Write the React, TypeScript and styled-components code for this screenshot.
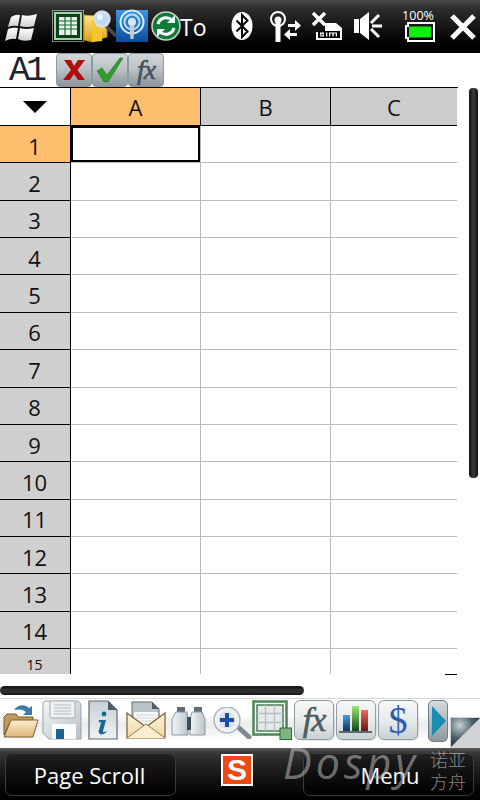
import React from "react";
import styled, { createGlobalStyle } from "styled-components";

const Global = createGlobalStyle`
  html, body { margin: 0; padding: 0; background: #fff; }
  body { font-family: "Open Sans", "Noto Sans", sans-serif; }
  * { box-sizing: border-box; }
`;

const Screen = styled.div`
  position: relative;
  width: 480px;
  height: 800px;
  overflow: hidden;
  display: flex;
  flex-direction: column;
  background: #fff;
`;

const StatusBar = styled.div`
  height: 53px;
  flex: none;
  position: relative;
  display: flex;
  align-items: center;
  padding-left: 5px;
  background: linear-gradient(#4a4a4a 0, #2e2e2e 8px, #161616 26px, #000 44px, #000 100%);
`;

const TitleText = styled.span`
  position: absolute;
  left: 180px;
  top: 12px;
  font-size: 23px;
  line-height: 30px;
  color: #fff;
`;

const StatusSlot = styled.div<{ $w: number; $ml?: number }>`
  width: ${(p) => p.$w}px;
  height: 53px;
  flex: none;
  margin-left: ${(p) => p.$ml ?? 0}px;
  position: relative;
  svg { display: block; }
`;

const BatteryLabel = styled.span`
  position: absolute;
  left: -3px;
  top: 9px;
  width: 36px;
  text-align: center;
  font-size: 12.5px;
  line-height: 13px;
  color: #fff;
`;

const FormulaBar = styled.div`
  height: 34px;
  flex: none;
  display: flex;
  align-items: center;
  background: #fff;
`;

const CellName = styled.div`
  width: 56px;
  height: 34px;
  padding-left: 9px;
  font-family: "Liberation Mono", monospace;
  font-size: 35px;
  line-height: 36px;
  letter-spacing: -4px;
  color: #1c2430;
`;

const FormulaButton = styled.div`
  width: 36px;
  height: 34px;
  flex: none;
  border: 1px solid #8b9ba3;
  border-radius: 4px;
  display: flex;
  align-items: center;
  justify-content: center;
  background: linear-gradient(#d2d7da 0, #bcc3c6 45%, #8d9699 100%);
`;

const FxText = styled.span<{ $size: number; $color: string }>`
  font-family: "Liberation Serif", serif;
  font-style: italic;
  font-size: ${(p) => p.$size}px;
  line-height: 1;
  letter-spacing: -1px;
  color: ${(p) => p.$color};
  -webkit-text-stroke: 0.6px ${(p) => p.$color};
`;

const Sheet = styled.div`
  height: 587px;
  width: 458px;
  flex: none;
  overflow: hidden;
  border-top: 1px solid #000;
  display: grid;
  grid-template-columns: 71px 130px 130px 126px;
  grid-template-rows: 38px repeat(15, 37.36px);
`;

const Corner = styled.div`
  border-right: 1px solid #000;
  border-bottom: 1px solid #000;
  display: flex;
  align-items: center;
  justify-content: center;
  background: #fff;
`;

const CornerArrow = styled.div`
  width: 0;
  height: 0;
  border-left: 12px solid transparent;
  border-right: 12px solid transparent;
  border-top: 12px solid #000;
`;

const ColHead = styled.div<{ $active?: boolean }>`
  background: ${(p) => (p.$active ? "#ffbe6e" : "#cccccc")};
  border-right: 1px solid #000;
  border-bottom: 1px solid #000;
  display: flex;
  align-items: center;
  justify-content: center;
  font-size: 22px;
  color: #111;
  &:nth-child(4) { border-right: 0; }
`;

const RowHead = styled.div<{ $active?: boolean; $small?: boolean }>`
  background: ${(p) => (p.$active ? "#ffbe6e" : "#cfcfcf")};
  border-right: 1px solid #000;
  border-bottom: 1px solid #000;
  display: flex;
  align-items: ${(p) => (p.$small ? "flex-start" : "center")};
  justify-content: center;
  font-size: ${(p) => (p.$small ? 14 : 22)}px;
  color: #111;
  padding-top: ${(p) => (p.$small ? 6 : 3)}px;
  padding-right: 1px;
`;

const Cell = styled.div<{ $selected?: boolean; $last?: boolean }>`
  background: #fff;
  border-right: ${(p) => (p.$last ? "0" : "1px solid #b9b9b9")};
  border-bottom: 1px solid #b9b9b9;
  box-shadow: ${(p) => (p.$selected ? "inset 0 0 0 2px #000" : "none")};
`;

const VThumb = styled.div`
  position: absolute;
  left: 469px;
  top: 88px;
  width: 9px;
  height: 390px;
  border-radius: 4px;
  background: linear-gradient(90deg, #111, #3a3a3a 50%, #111);
`;

const GridDash = styled.div`
  position: absolute;
  left: 445px;
  top: 674px;
  width: 12px;
  height: 1px;
  background: #000;
`;

const HScrollTrack = styled.div`
  height: 24px;
  flex: none;
  padding-top: 12px;
  background: #fff;
`;

const HThumb = styled.div`
  width: 304px;
  height: 9px;
  border-radius: 4.5px;
  background: linear-gradient(#111, #333 55%, #161616);
`;

const Toolbar = styled.div`
  height: 50px;
  flex: none;
  position: relative;
  display: flex;
  align-items: flex-start;
  border-top: 1px solid #d6d6d6;
  background: linear-gradient(#fff 0, #fff 15px, #ececec 25px, #f4f4f4 34px, #fff 42px);
`;

const ToolSlot = styled.div<{ $w: number; $ml: number; $mt: number }>`
  width: ${(p) => p.$w}px;
  flex: none;
  margin-left: ${(p) => p.$ml}px;
  margin-top: ${(p) => p.$mt}px;
  svg { display: block; }
`;

const ToolButton = styled.div`
  width: 40px;
  height: 40px;
  flex: none;
  margin-top: 1px;
  margin-left: 2px;
  border: 1px solid #8e9ca6;
  border-radius: 6px;
  display: flex;
  align-items: center;
  justify-content: center;
  background: linear-gradient(#f6f7f8 0, #e6e9ea 55%, #c9cfd2 100%);
  box-shadow: 1px 1px 1px rgba(0, 0, 0, 0.1);
`;

const DollarText = styled.span`
  font-family: "Liberation Serif", serif;
  font-size: 38px;
  line-height: 1;
  color: #2a5cb0;
`;

const NextButton = styled.div`
  width: 20px;
  height: 42px;
  flex: none;
  margin-left: 10px;
  margin-top: 1px;
  border: 1px solid #6f8088;
  border-radius: 5px;
  background: linear-gradient(#d5dadc, #8f999d);
  display: flex;
  align-items: center;
  padding-left: 3px;
`;

const NextArrow = styled.div`
  width: 0;
  height: 0;
  border-top: 15px solid transparent;
  border-bottom: 15px solid transparent;
  border-left: 14px solid #1c8db0;
`;

const CornerFold = styled.div`
  position: absolute;
  right: 0;
  bottom: 0;
  svg { display: block; }
`;

const SoftBar = styled.div`
  height: 52px;
  flex: none;
  position: relative;
  display: flex;
  align-items: center;
  padding-left: 5px;
  background: linear-gradient(#5a5a5a 0, #3a3a3a 4px, #262626 14px, #0c0c0c 36px, #000 100%);
`;

const SoftKey = styled.div<{ $ml?: number; $shift?: number }>`
  width: 171px;
  height: 43px;
  flex: none;
  margin-left: ${(p) => p.$ml ?? 0}px;
  margin-top: 1px;
  border: 1px solid #3c3c3c;
  border-radius: 7px;
  display: flex;
  align-items: center;
  justify-content: center;
  padding-left: ${(p) => Math.max(p.$shift ?? 0, 0)}px;
  padding-right: ${(p) => Math.max(-(p.$shift ?? 0), 0)}px;
  color: #fff;
  font-size: 22px;
  background: rgba(0, 0, 0, 0.35);
  z-index: 1;
`;

const Sogou = styled.div`
  position: absolute;
  left: 221px;
  top: 6px;
  width: 32px;
  height: 32px;
  border: 2px solid #fff;
  background: #ec4a12;
  color: #fff;
  font-family: "Liberation Sans", sans-serif;
  font-weight: 700;
  font-size: 30px;
  line-height: 28px;
  text-align: center;
  z-index: 2;
`;

const Watermark = styled.div`
  position: absolute;
  left: 283px;
  top: -15px;
  font-family: "Open Sans", sans-serif;
  font-style: italic;
  font-size: 43px;
  line-height: 60px;
  letter-spacing: 4px;
  color: rgba(190, 190, 190, 0.55);
  z-index: 3;
  white-space: nowrap;
`;

const WatermarkCjk = styled.div`
  position: absolute;
  left: 430px;
  top: 0;
  width: 38px;
  font-family: "Noto Sans CJK SC", sans-serif;
  font-size: 18px;
  font-weight: 300;
  line-height: 22px;
  color: rgba(190, 190, 190, 0.7);
  z-index: 3;
`;

const Windows = () => (
  <svg width="32" height="53" viewBox="0 0 32 53">
    <defs>
      <linearGradient id="win" x1="0" y1="0" x2="0" y2="1">
        <stop offset="0" stopColor="#fff" />
        <stop offset="1" stopColor="#cfcfcf" />
      </linearGradient>
    </defs>
    <path d="M6 17q5-3 9-2l-2 11q-5-1-10 1z" fill="url(#win)" />
    <path d="M17 15q6 2 15-1l-3 12q-8 2-14 0z" fill="url(#win)" />
    <path d="M3 29q5-2 10-1l-2 11q-5-1-11 2z" fill="url(#win)" />
    <path d="M15 28q6 2 14 0l-3 12q-8 2-13-1z" fill="url(#win)" />
  </svg>
);

const AppIcon = () => (
  <svg width="32" height="53" viewBox="0 0 32 53">
    <rect x="0.5" y="10.5" width="31" height="31" fill="none" stroke="#fff" strokeDasharray="1 1" />
    <rect x="2" y="12" width="28" height="28" fill="#9fd6a2" />
    <rect x="4" y="14" width="24" height="24" fill="#0f3d22" />
    <rect x="7" y="17" width="18" height="18" fill="#e8f3e4" />
    <path d="M7 21h18M7 25h18M7 29h18M13 17v18M19 17v18" stroke="#1f6a3a" strokeWidth="1.2" />
  </svg>
);

const FolderSearch = () => (
  <svg width="34" height="53" viewBox="0 0 34 53">
    <defs>
      <linearGradient id="fy" x1="0" y1="0" x2="0" y2="1">
        <stop offset="0" stopColor="#ffe98a" />
        <stop offset="1" stopColor="#d9a012" />
      </linearGradient>
    </defs>
    <path d="M0 15l14 1 9 3v18l-15 5-8-2z" fill="url(#fy)" stroke="#c08a10" strokeWidth="0.8" />
    <path d="M8 19l10 2v20l-10 1z" fill="#f2c531" />
    <path d="M22 26l9 9" stroke="#4a4a4a" strokeWidth="3.4" strokeLinecap="round" />
    <circle cx="18" cy="19" r="7.5" fill="#bcd9f4" stroke="#d8dfe6" strokeWidth="2.4" />
    <circle cx="16" cy="17" r="3" fill="#eaf4fd" />
  </svg>
);

const Podcast = () => (
  <svg width="32" height="53" viewBox="0 0 32 53">
    <defs>
      <linearGradient id="pb" x1="0" y1="0" x2="0" y2="1">
        <stop offset="0" stopColor="#3f97e6" />
        <stop offset="1" stopColor="#0a4c99" />
      </linearGradient>
    </defs>
    <rect x="0" y="10" width="32" height="32" fill="url(#pb)" />
    <circle cx="16" cy="22" r="11.5" fill="none" stroke="#d4ecff" strokeWidth="2" />
    <circle cx="16" cy="22" r="7.5" fill="none" stroke="#bfe0fb" strokeWidth="2" />
    <circle cx="16" cy="22" r="4" fill="#e2e6ea" />
    <path d="M13.5 25h5l-1 14h-3z" fill="#c5cbd1" />
  </svg>
);

const SyncIcon = () => (
  <svg width="32" height="53" viewBox="0 0 32 53">
    <circle cx="16" cy="26" r="14" fill="#0f7a37" stroke="#c7d2cc" strokeWidth="1.6" />
    <path d="M8 24a8.5 8.5 0 0 1 14-4" fill="none" stroke="#fff" strokeWidth="3" />
    <path d="M25 15v8h-8z" fill="#fff" />
    <path d="M24 28a8.5 8.5 0 0 1-14 4" fill="none" stroke="#fff" strokeWidth="3" />
    <path d="M7 37v-8h8z" fill="#fff" />
  </svg>
);

const Bluetooth = () => (
  <svg width="22" height="53" viewBox="0 0 22 53">
    <ellipse cx="11" cy="26" rx="10.5" ry="14" fill="#fff" />
    <path d="M5.5 20.5l11 11-5.5 5.5v-22l5.5 5.5-11 11" fill="none" stroke="#000" strokeWidth="2" />
  </svg>
);

const Antenna = () => (
  <svg width="34" height="53" viewBox="0 0 34 53">
    <circle cx="10" cy="19" r="7" fill="none" stroke="#fff" strokeWidth="2" />
    <circle cx="10" cy="20" r="3.5" fill="#fff" />
    <path d="M7.5 22h5v20h-5z" fill="#fff" />
    <path d="M20 27h7v-4l6 5.5-6 5.5v-4h-7z" fill="#fff" transform="translate(0 -3)" />
    <path d="M31 34h-7v-4l-6 5.5 6 5.5v-4h7z" fill="#fff" transform="translate(-2 -1)" />
  </svg>
);

const SimOff = () => (
  <svg width="32" height="53" viewBox="0 0 32 53">
    <path d="M14 23h11l6 5v12H5V32h9z" fill="#fff" />
    <rect x="7" y="31" width="22" height="7" fill="#000" />
    <path d="M9 32.5h4v1.4h-3v.6h3v2h-4v-1.2h3v-.6H9zM15 32.5h1.4v4H15zM18 32.5h8v4h-1.3v-3h-2v3h-1.4v-3h-2v3H18z" fill="#fff" />
    <path d="M2 13l12 12M14 13L2 25" stroke="#fff" strokeWidth="3.4" />
  </svg>
);

const Speaker = () => (
  <svg width="30" height="53" viewBox="0 0 30 53">
    <path d="M1 19h5v14H1zM7 19l9-7v28l-9-7z" fill="#fff" />
    <path d="M18 23l8-8M19 26h10M18 29l8 8" stroke="#fff" strokeWidth="3" />
  </svg>
);

const Battery = () => (
  <svg width="32" height="53" viewBox="0 0 32 53">
    <path d="M3 26h2v-3h26v18H5v-3H3z" fill="none" stroke="#fff" strokeWidth="2" />
    <rect x="6" y="26.5" width="22" height="11" fill="#10f010" />
  </svg>
);

const CloseX = () => (
  <svg width="26" height="53" viewBox="0 0 26 53">
    <path d="M2 16l22 22M24 16L2 38" stroke="#fff" strokeWidth="5.2" />
  </svg>
);

const RedX = () => (
  <svg width="26" height="26" viewBox="0 0 26 26">
    <path d="M3 3h7l3 6 4-6h7l-7.5 10L24 23h-7l-4-6-4 6H2l8-10z" fill="#b00d0d" />
  </svg>
);

const Check = () => (
  <svg width="30" height="28" viewBox="0 0 30 28">
    <path d="M2 15l5-3 5 7L25 2h3L13 26H9z" fill="#2f9c2c" stroke="#1f7d20" strokeWidth="0.6" />
  </svg>
);

const FolderIcon = () => (
  <svg width="36" height="37" viewBox="0 0 36 37">
    <defs>
      <linearGradient id="fo" x1="0" y1="0" x2="0" y2="1">
        <stop offset="0" stopColor="#fcefd0" />
        <stop offset="1" stopColor="#dcb678" />
      </linearGradient>
    </defs>
    <path d="M1 33V15l3-3h9l2 3h15v5H7z" fill="#c19a5e" stroke="#7d5d2c" />
    <path d="M1 35l7-17h27l-5 17z" fill="url(#fo)" stroke="#7d5d2c" />
    <path d="M11 8c4-6 11-6 15-2l3-2v9h-9l3-3c-3-3-8-3-12-2z" fill="#3c7ba8" />
  </svg>
);

const Floppy = () => (
  <svg width="40" height="40" viewBox="0 0 40 40">
    <defs>
      <linearGradient id="fl" x1="0" y1="0" x2="1" y2="1">
        <stop offset="0" stopColor="#f6f8fa" />
        <stop offset="1" stopColor="#b5bfc6" />
      </linearGradient>
    </defs>
    <path d="M3 1h33l3 3v35H7l-6-6V3z" fill="url(#fl)" stroke="#97a4ad" />
    <rect x="8" y="1" width="25" height="17" rx="1" fill="#eef0f1" stroke="#a4aeb5" />
    <path d="M12 5h17M12 8h17M12 11h17M12 14h17" stroke="#b5bcc2" />
    <rect x="10" y="24" width="24" height="15" fill="#fafbfd" />
    <rect x="14" y="29" width="8" height="10" fill="#1c628f" />
  </svg>
);

const InfoDoc = () => (
  <svg width="30" height="40" viewBox="0 0 30 40">
    <defs>
      <linearGradient id="inf" x1="0" y1="0" x2="0" y2="1">
        <stop offset="0" stopColor="#c7d0d4" />
        <stop offset="1" stopColor="#eff2f3" />
      </linearGradient>
    </defs>
    <path d="M1 1h19l9 9v29H1z" fill="url(#inf)" stroke="#5b6a72" strokeWidth="1.2" />
    <path d="M20 1v9h9z" fill="#4d5e66" />
    <circle cx="16" cy="14" r="2.4" fill="#176a94" />
    <path d="M11 20h7l-3 11c0 2 2 1 3 0l.6.8c-2 3-8 4-8-.5l2.500-9h-2.500z" fill="#176a94" />
  </svg>
);

const Mail = () => (
  <svg width="40" height="38" viewBox="0 0 40 38">
    <defs>
      <linearGradient id="ml" x1="0" y1="0" x2="0" y2="1">
        <stop offset="0" stopColor="#fdf3dc" />
        <stop offset="1" stopColor="#efd7a8" />
      </linearGradient>
    </defs>
    <path d="M6 1h20l7 7v14H6z" fill="#b9c2c6" stroke="#5b6a72" />
    <path d="M26 1v7h7z" fill="#4d5e66" />
    <path d="M8 11h24v14H8z" fill="#f7f9fa" />
    <path d="M10 14h20M10 17h20M10 20h20" stroke="#cfd6da" />
    <path d="M1 12l19 14 19-14v25H1z" fill="url(#ml)" stroke="#7d5d2c" strokeWidth="1.2" />
    <path d="M1 37l19-14 19 14" fill="#fbeed1" stroke="#9c7a42" />
  </svg>
);

const Binoculars = () => (
  <svg width="35" height="30" viewBox="0 0 35 30">
    <defs>
      <linearGradient id="bn" x1="0" y1="0" x2="1" y2="0">
        <stop offset="0" stopColor="#f2f5f6" />
        <stop offset="1" stopColor="#bcc5c9" />
      </linearGradient>
    </defs>
    <rect x="6" y="0" width="8" height="5" fill="#5f6d74" />
    <rect x="23" y="0" width="8" height="5" fill="#5f6d74" />
    <path d="M5 5h11l1 6v0h0v17H1V12z" fill="url(#bn)" stroke="#8b989e" />
    <path d="M21 5h10l3 7v16H19V11z" fill="url(#bn)" stroke="#8b989e" />
    <rect x="16" y="10" width="4" height="13" fill="#34505f" />
  </svg>
);

const Magnifier = () => (
  <svg width="40" height="32" viewBox="0 0 40 32">
    <path d="M26 20l11 10" stroke="#7d8a90" strokeWidth="5" strokeLinecap="round" />
    <circle cx="15" cy="13" r="13" fill="#eef1f3" stroke="#aeb7bc" strokeWidth="1.5" />
    <circle cx="15" cy="13" r="8.5" fill="#dbe3e8" />
    <path d="M13 6h4v5h5v4h-5v5h-4v-5H8v-4h5z" fill="#1d4ba6" />
  </svg>
);

const GridIcon = () => (
  <svg width="40" height="40" viewBox="0 0 40 40">
    <rect x="1.500" y="1.500" width="33" height="33" fill="#fff" stroke="#4f8a57" strokeWidth="2.6" />
    <rect x="5" y="5" width="26" height="26" fill="#e6e9ea" stroke="#1f5f33" strokeWidth="1.2" />
    <path d="M13.500 5v26M22.500 5v26M5 13.500h26M5 22.500h26" stroke="#b9c0c3" strokeWidth="1.4" />
    <rect x="28" y="28" width="11.500" height="11.500" fill="#7fb37f" stroke="#2e6b3b" />
  </svg>
);

const Chart = () => (
  <svg width="34" height="30" viewBox="0 0 34 30">
    <defs>
      <linearGradient id="c1" x1="0" y1="0" x2="0" y2="1">
        <stop offset="0" stopColor="#4a9fdc" />
        <stop offset="1" stopColor="#0c2f66" />
      </linearGradient>
      <linearGradient id="c2" x1="0" y1="0" x2="0" y2="1">
        <stop offset="0" stopColor="#9fe56c" />
        <stop offset="1" stopColor="#0f4a19" />
      </linearGradient>
      <linearGradient id="c3" x1="0" y1="0" x2="0" y2="1">
        <stop offset="0" stopColor="#ec6b5b" />
        <stop offset="1" stopColor="#6e1513" />
      </linearGradient>
    </defs>
    <rect x="4" y="10" width="7" height="16" fill="url(#c1)" />
    <rect x="13" y="1" width="7" height="25" fill="url(#c2)" />
    <rect x="22" y="5" width="7" height="21" fill="url(#c3)" />
    <path d="M0 27h33" stroke="#5c6a70" strokeWidth="2" />
  </svg>
);

const Fold = () => (
  <svg width="30" height="31" viewBox="0 0 30 31">
    <defs>
      <radialGradient id="fd" cx="0.3" cy="0.25" r="0.8">
        <stop offset="0" stopColor="#c8d2d6" />
        <stop offset="0.55" stopColor="#4c616c" />
        <stop offset="1" stopColor="#1d3340" />
      </radialGradient>
    </defs>
    <rect width="30" height="31" fill="#cfd3d5" />
    <path d="M1 1h29L1 30z" fill="url(#fd)" />
  </svg>
);

const ROWS = Array.from({ length: 15 }, (_, i) => i + 1);
const COLS = ["A", "B", "C"];

export default function App() {
  return (
    <Screen>
      <Global />
      <StatusBar>
        <StatusSlot $w={32}><Windows /></StatusSlot>
        <StatusSlot $w={32} $ml={15}><AppIcon /></StatusSlot>
        <StatusSlot $w={32}><FolderSearch /></StatusSlot>
        <StatusSlot $w={32}><Podcast /></StatusSlot>
        <StatusSlot $w={32} $ml={2}><SyncIcon /></StatusSlot>
        <TitleText>To</TitleText>
        <StatusSlot $w={22} $ml={49}><Bluetooth /></StatusSlot>
        <StatusSlot $w={34} $ml={15}><Antenna /></StatusSlot>
        <StatusSlot $w={32} $ml={9}><SimOff /></StatusSlot>
        <StatusSlot $w={30} $ml={10}><Speaker /></StatusSlot>
        <StatusSlot $w={32} $ml={20}>
          <BatteryLabel>100%</BatteryLabel>
          <Battery />
        </StatusSlot>
        <StatusSlot $w={26} $ml={15}><CloseX /></StatusSlot>
      </StatusBar>

      <FormulaBar>
        <CellName>A1</CellName>
        <FormulaButton><RedX /></FormulaButton>
        <FormulaButton><Check /></FormulaButton>
        <FormulaButton><FxText $size={28} $color="#44535c">fx</FxText></FormulaButton>
      </FormulaBar>

      <Sheet>
        <Corner><CornerArrow /></Corner>
        {COLS.map((c, i) => (
          <ColHead key={c} $active={i === 0}>{c}</ColHead>
        ))}
        {ROWS.map((r) => (
          <React.Fragment key={r}>
            <RowHead $active={r === 1} $small={r === 15}>{r}</RowHead>
            {COLS.map((c, i) => (
              <Cell key={c} $selected={r === 1 && i === 0} $last={i === 2} />
            ))}
          </React.Fragment>
        ))}
      </Sheet>
      <VThumb />
      <GridDash />

      <HScrollTrack><HThumb /></HScrollTrack>

      <Toolbar>
        <ToolSlot $w={36} $ml={3} $mt={3}><FolderIcon /></ToolSlot>
        <ToolSlot $w={40} $ml={3} $mt={1}><Floppy /></ToolSlot>
        <ToolSlot $w={30} $ml={6} $mt={1}><InfoDoc /></ToolSlot>
        <ToolSlot $w={40} $ml={8} $mt={2}><Mail /></ToolSlot>
        <ToolSlot $w={35} $ml={5} $mt={8}><Binoculars /></ToolSlot>
        <ToolSlot $w={40} $ml={6} $mt={8}><Magnifier /></ToolSlot>
        <ToolSlot $w={40} $ml={0} $mt={1}><GridIcon /></ToolSlot>
        <ToolButton><FxText $size={34} $color="#4b5c62">fx</FxText></ToolButton>
        <ToolButton><Chart /></ToolButton>
        <ToolButton><DollarText>$</DollarText></ToolButton>
        <NextButton><NextArrow /></NextButton>
        <CornerFold><Fold /></CornerFold>
      </Toolbar>

      <SoftBar>
        <SoftKey $shift={-2}>Page Scroll</SoftKey>
        <Sogou>S</Sogou>
        <SoftKey $ml={127} $shift={3}>Menu</SoftKey>
        <Watermark>Dospy</Watermark>
        <WatermarkCjk>诺亚<br />方舟</WatermarkCjk>
      </SoftBar>
    </Screen>
  );
}
